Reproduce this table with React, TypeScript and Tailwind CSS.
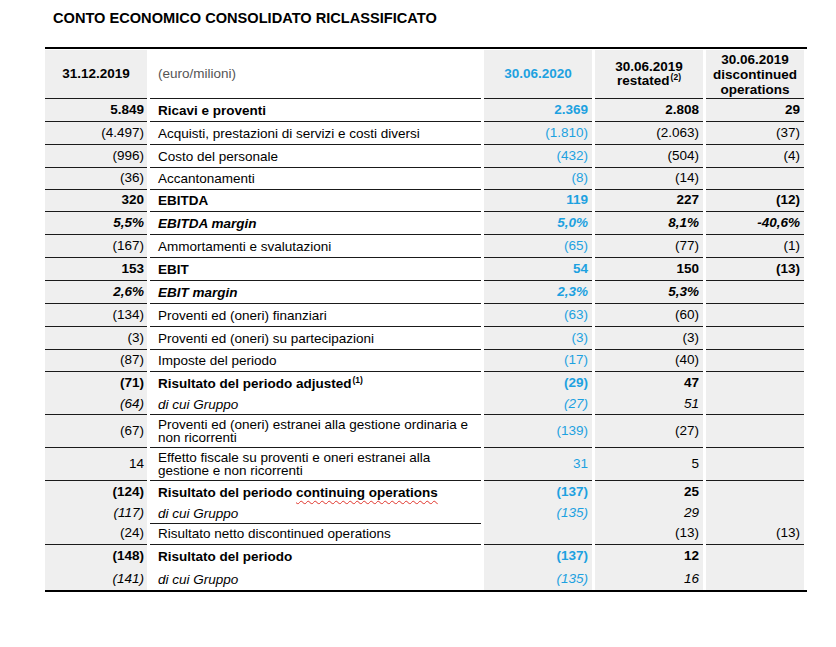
import type { ReactNode } from 'react';

type Kind = 'normal' | 'bold' | 'boldItalic' | 'italic';

interface Row {
  label: ReactNode;
  values: [string, string, string, string];
  kind: Kind;
  h: string; // full height class, border included
  line?: boolean;
}

const Sup = ({ n }: { n: string }) => (
  <span className="relative -top-[5px] ml-[1px] text-[8.5px] leading-none">({n})</span>
);

const rows: Row[] = [
  { label: 'Ricavi e proventi', values: ['5.849', '2.369', '2.808', '29'], kind: 'bold', h: 'h-[23px]', line: true },
  { label: 'Acquisti, prestazioni di servizi e costi diversi', values: ['(4.497)', '(1.810)', '(2.063)', '(37)'], kind: 'normal', h: 'h-[23px]', line: true },
  { label: 'Costo del personale', values: ['(996)', '(432)', '(504)', '(4)'], kind: 'normal', h: 'h-[23px]', line: true },
  { label: 'Accantonamenti', values: ['(36)', '(8)', '(14)', ''], kind: 'normal', h: 'h-[22px]', line: true },
  { label: 'EBITDA', values: ['320', '119', '227', '(12)'], kind: 'bold', h: 'h-[22px]', line: true },
  { label: 'EBITDA margin', values: ['5,5%', '5,0%', '8,1%', '-40,6%'], kind: 'boldItalic', h: 'h-[23px]', line: true },
  { label: 'Ammortamenti e svalutazioni', values: ['(167)', '(65)', '(77)', '(1)'], kind: 'normal', h: 'h-[23px]', line: true },
  { label: 'EBIT', values: ['153', '54', '150', '(13)'], kind: 'bold', h: 'h-[23px]', line: true },
  { label: 'EBIT margin', values: ['2,6%', '2,3%', '5,3%', ''], kind: 'boldItalic', h: 'h-[23px]', line: true },
  { label: 'Proventi ed (oneri) finanziari', values: ['(134)', '(63)', '(60)', ''], kind: 'normal', h: 'h-[23px]', line: true },
  { label: 'Proventi ed (oneri) su partecipazioni', values: ['(3)', '(3)', '(3)', ''], kind: 'normal', h: 'h-[23px]', line: true },
  { label: 'Imposte del periodo', values: ['(87)', '(17)', '(40)', ''], kind: 'normal', h: 'h-[22px]', line: true },
  {
    label: (
      <>
        Risultato del periodo adjusted
        <Sup n="1" />
      </>
    ),
    values: ['(71)', '(29)', '47', ''],
    kind: 'bold',
    h: 'h-[22px]',
  },
  { label: 'di cui Gruppo', values: ['(64)', '(27)', '51', ''], kind: 'italic', h: 'h-[21px]', line: true },
  {
    label: (
      <>
        Proventi ed (oneri) estranei alla gestione ordinaria e<br />
        non ricorrenti
      </>
    ),
    values: ['(67)', '(139)', '(27)', ''],
    kind: 'normal',
    h: 'h-[33px]',
    line: true,
  },
  {
    label: (
      <>
        Effetto fiscale su proventi e oneri estranei alla
        <br />
        gestione e non ricorrenti
      </>
    ),
    values: ['14', '31', '5', ''],
    kind: 'normal',
    h: 'h-[33px]',
    line: true,
  },
  {
    label: (
      <>
        Risultato del periodo{' '}
        <span className="underline decoration-wavy decoration-[#e0342b] decoration-1 underline-offset-[3px]">
          continuing operations
        </span>
      </>
    ),
    values: ['(124)', '(137)', '25', ''],
    kind: 'bold',
    h: 'h-[22px]',
  },
  { label: 'di cui Gruppo', values: ['(117)', '(135)', '29', ''], kind: 'italic', h: 'h-[20px]', line: true },
  { label: 'Risultato netto discontinued operations', values: ['(24)', '', '(13)', '(13)'], kind: 'normal', h: 'h-[22px]', line: true },
  { label: 'Risultato del periodo', values: ['(148)', '(137)', '12', ''], kind: 'bold', h: 'h-[23px]' },
  { label: 'di cui Gruppo', values: ['(141)', '(135)', '16', ''], kind: 'italic', h: 'h-[22px]' },
];

const kindClass: Record<Kind, string> = {
  normal: 'font-normal',
  bold: 'font-bold',
  boldItalic: 'font-bold italic',
  italic: 'font-normal italic',
};

const gridCols = 'grid grid-cols-[102px_331px_108px_108px_98px] gap-x-[3px]';

export default function App() {
  return (
    <div className="min-h-screen bg-white font-['Liberation_Sans',Arial,sans-serif] text-black pl-[45px] pt-[8px]">
      <h1 className="ml-[8px] text-[14.6px] leading-[20px] font-bold">
        CONTO ECONOMICO CONSOLIDATO RICLASSIFICATO
      </h1>

      <div className="mt-[19px] w-[762px] border-t-2 border-b-2 border-black pt-px text-[13.5px]">
        {/* header */}
        <div className={`${gridCols} h-[49px]`}>
          <div className="flex items-center justify-center bg-[#efefef] border-b border-[#1a1a1a] font-bold">
            31.12.2019
          </div>
          <div className="flex items-center pl-[8px] border-b border-[#1a1a1a] text-[#555]">(euro/milioni)</div>
          <div className="flex items-center justify-center bg-[#efefef] border-b border-[#1a1a1a] font-bold text-[#1da1e0]">
            30.06.2020
          </div>
          <div className="flex flex-col items-center justify-center bg-[#efefef] border-b border-[#1a1a1a] font-bold leading-[14px] text-center">
            <span>30.06.2019</span>
            <span>
              restated
              <Sup n="2" />
            </span>
          </div>
          <div className="flex flex-col items-center justify-center bg-[#efefef] border-b border-[#1a1a1a] font-bold leading-[15px] text-center">
            <span>30.06.2019</span>
            <span>discontinued</span>
            <span>operations</span>
          </div>
        </div>

        {rows.map((row, i) => {
          const line = row.line ? 'border-b border-[#1a1a1a]' : '';
          const k = kindClass[row.kind];
          return (
            <div key={i} className={`${gridCols} ${row.h}`}>
              <div className={`flex items-center justify-end pr-[3px] bg-[#efefef] ${line} ${k}`}>{row.values[0]}</div>
              <div className={`flex items-center pl-[8px] leading-[13px] ${line} ${k}`}>
                <span>{row.label}</span>
              </div>
              <div className={`flex items-center justify-end pr-[4px] bg-[#efefef] text-[#1da1e0] ${line} ${k}`}>
                {row.values[1]}
              </div>
              <div className={`flex items-center justify-end pr-[4px] bg-[#efefef] ${line} ${k}`}>{row.values[2]}</div>
              <div className={`flex items-center justify-end pr-[4px] bg-[#efefef] ${line} ${k}`}>{row.values[3]}</div>
            </div>
          );
        })}
      </div>
    </div>
  );
}
